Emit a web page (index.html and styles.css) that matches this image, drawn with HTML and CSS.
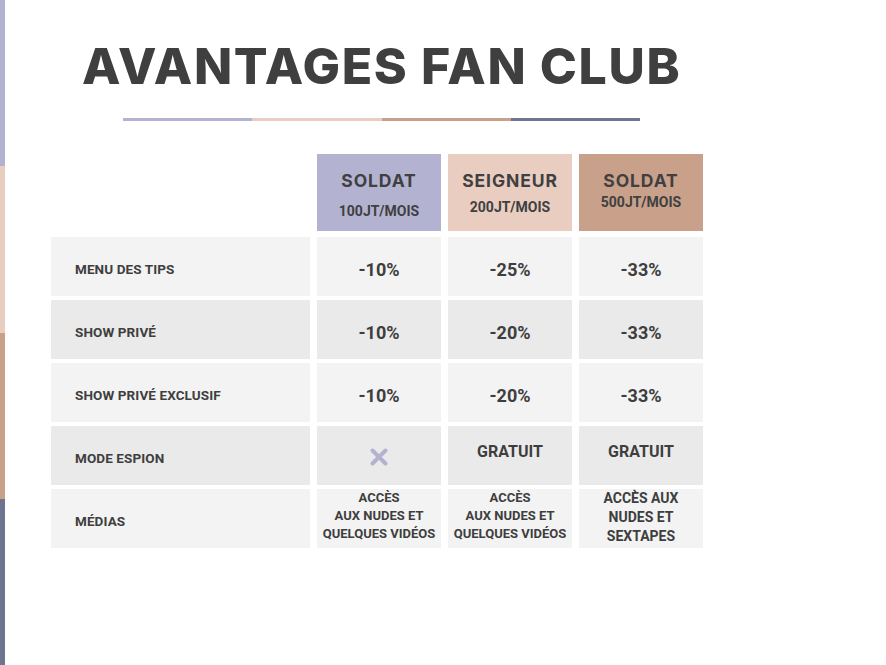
FILE: index.html
```html
<!DOCTYPE html>
<html lang="fr">
<head>
<meta charset="utf-8">
<title>Avantages Fan Club</title>
<link rel="stylesheet" href="styles.css">
</head>
<body>
<div class="page">
  <div class="edge">
    <span class="edge__seg c-lav"></span>
    <span class="edge__seg c-pink"></span>
    <span class="edge__seg c-tan"></span>
    <span class="edge__seg c-slate"></span>
  </div>
  <main class="main">
    <h1 class="title">AVANTAGES FAN CLUB</h1>
    <div class="rule">
      <span class="rule__seg c-lav"></span>
      <span class="rule__seg c-pink"></span>
      <span class="rule__seg c-tan"></span>
      <span class="rule__seg c-slate"></span>
    </div>
    <div class="table">
      <div class="blank"></div>
      <div class="head c-lav">
        <div class="head__name">SOLDAT</div>
        <div class="head__price head__price--a">100JT/MOIS</div>
      </div>
      <div class="head c-pink">
        <div class="head__name">SEIGNEUR</div>
        <div class="head__price head__price--b">200JT/MOIS</div>
      </div>
      <div class="head c-tan">
        <div class="head__name">SOLDAT</div>
        <div class="head__price head__price--c">500JT/MOIS</div>
      </div>

      <div class="label light">MENU DES TIPS</div>
      <div class="cell light">-10%</div>
      <div class="cell light">-25%</div>
      <div class="cell light">-33%</div>

      <div class="label dark">SHOW PRIVÉ</div>
      <div class="cell dark">-10%</div>
      <div class="cell dark">-20%</div>
      <div class="cell dark">-33%</div>

      <div class="label light">SHOW PRIVÉ EXCLUSIF</div>
      <div class="cell light">-10%</div>
      <div class="cell light">-20%</div>
      <div class="cell light">-33%</div>

      <div class="label dark">MODE ESPION</div>
      <div class="cell dark">
        <svg class="cross" width="18" height="18" viewBox="0 0 18 18" aria-label="non">
          <path d="M2.5 2.5 L15.5 15.5 M15.5 2.5 L2.5 15.5" stroke="#b3b3d1" stroke-width="4" stroke-linecap="round" fill="none"/>
        </svg>
      </div>
      <div class="cell dark cell--word">GRATUIT</div>
      <div class="cell dark cell--word">GRATUIT</div>

      <div class="label light">MÉDIAS</div>
      <div class="cell light cell--media">ACCÈS<br>AUX NUDES ET<br>QUELQUES VIDÉOS</div>
      <div class="cell light cell--media">ACCÈS<br>AUX NUDES ET<br>QUELQUES VIDÉOS</div>
      <div class="cell light cell--media cell--media-big">ACCÈS AUX<br>NUDES ET<br>SEXTAPES</div>
    </div>
  </main>
</div>
</body>
</html>
```

FILE: styles.css
```css
* { box-sizing: border-box; }

html, body {
  margin: 0;
  padding: 0;
  background: #ffffff;
}

body {
  font-family: Roboto, "Liberation Sans", sans-serif;
  color: #3e3e3e;
}

.page {
  display: flex;
  width: 886px;
  height: 665px;
  overflow: hidden;
}

.edge {
  width: 5px;
  flex: none;
  display: flex;
  flex-direction: column;
}

.edge__seg { flex: 1; }

.c-lav { background: #b3b3d1; }
.c-pink { background: #e9cdc1; }
.c-tan { background: #c9a08a; }
.c-slate { background: #6f7591; }

.main {
  flex: 1;
  display: flex;
  flex-direction: column;
}

.title {
  margin: 38px 0 0 77px;
  font-family: Inter, "Open Sans", sans-serif;
  font-weight: 800;
  font-size: 50px;
  line-height: 56px;
  letter-spacing: 1.6px;
  color: #3f3f3f;
}

.rule {
  display: flex;
  width: 517px;
  height: 3px;
  margin: 24px 0 0 118px;
}

.rule__seg { flex: 1; }

.table {
  display: grid;
  grid-template-columns: 259px 124px 124px 124px;
  grid-template-rows: 79px repeat(5, 59px);
  column-gap: 7px;
  row-gap: 4px;
  margin: 33px 0 0 46px;
}

.blank { background: transparent; }

.head {
  margin-bottom: 2px;
  padding-top: 16px;
  text-align: center;
  display: flex;
  flex-direction: column;
  align-items: center;
}

.head__name {
  font-family: Inter, "Open Sans", sans-serif;
  font-weight: 700;
  font-size: 17.5px;
  line-height: 22px;
  letter-spacing: 0.9px;
  color: #404040;
}

.head__price {
  font-weight: 700;
  font-size: 14px;
  line-height: 18px;
  color: #404040;
}

.head__price--a { margin-top: 10px; }
.head__price--b { margin-top: 6px; }
.head__price--c { margin-top: 1px; }

.light { background: #f3f3f3; }
.dark { background: #eaeaea; }

.label {
  display: flex;
  align-items: center;
  padding: 5px 0 0 24px;
  font-weight: 700;
  font-size: 13.5px;
  letter-spacing: 0.1px;
  color: #3e3e3e;
}

.cell {
  display: flex;
  align-items: center;
  justify-content: center;
  padding-top: 5px;
  text-align: center;
  font-weight: 700;
  font-size: 18px;
  color: #3e3e3e;
}

.cell--word {
  padding-top: 0;
  padding-bottom: 8px;
  font-size: 16px;
}

.cross { display: block; margin-top: -3px; }

.cell--media {
  padding-top: 0;
  padding-bottom: 5px;
  font-size: 13px;
  line-height: 18px;
  letter-spacing: 0;
}

.cell--media-big {
  font-size: 14px;
  line-height: 19px;
  letter-spacing: 0;
  padding-bottom: 2px;
}
```
